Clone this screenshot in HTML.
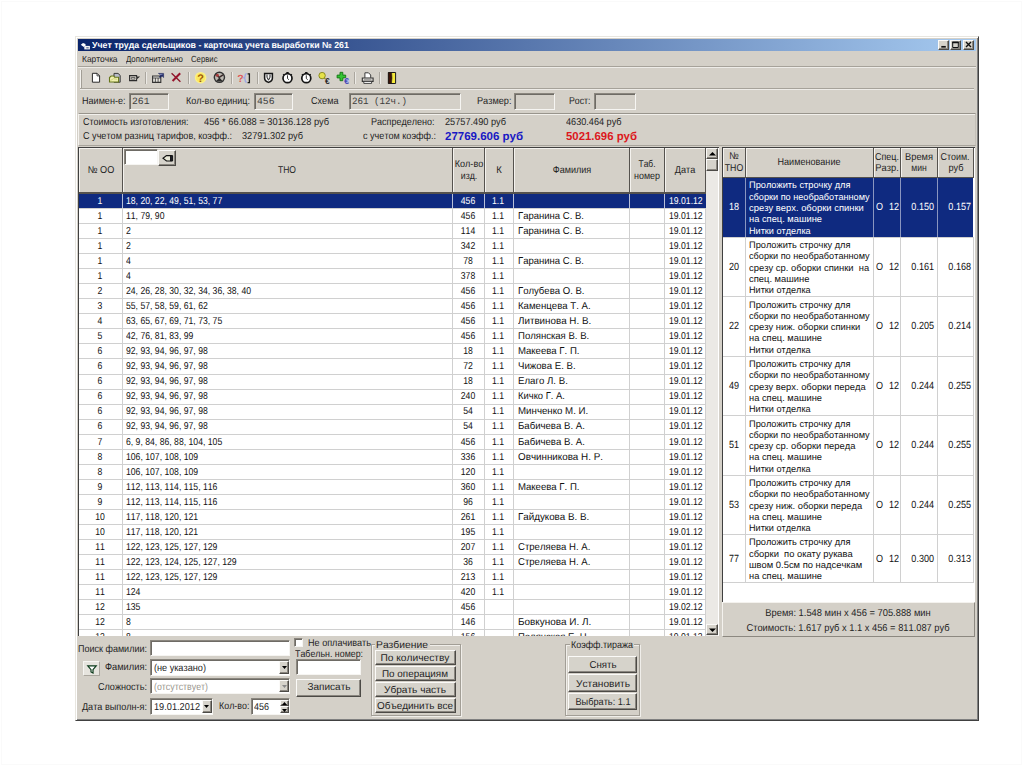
<!DOCTYPE html>
<html lang="ru"><head><meta charset="utf-8"><title>Учет труда сдельщиков</title>
<style>
html,body{margin:0;padding:0;background:#fff;}
body{width:1024px;height:767px;position:relative;overflow:hidden;font-family:"Liberation Sans",sans-serif;font-size:10.4px;color:#242424;text-rendering:geometricPrecision;}
div{position:absolute;box-sizing:border-box;}
.t{position:absolute;white-space:pre;font-kerning:none;line-height:14px;height:14px;transform-origin:left center;}
.t.c{transform-origin:center center;}
.t.r{transform-origin:right center;}
svg{position:absolute;overflow:visible;}
.sunk{border:1px solid;border-color:#8a867e #f6f5f2 #f6f5f2 #8a867e;box-shadow:inset 1px 1px 0 #6e6b65;}
.btn{background:#d6d3cb;border:1px solid;border-color:#fbfaf8 #4c4a46 #4c4a46 #fbfaf8;box-shadow:inset -1px -1px 0 #8a867f;}
.hd{background:#d4d0c8;border-right:1px solid #55524e;border-bottom:1px solid #55524e;box-shadow:inset 1px 1px 0 #f4f2ee;}
.grp{border:1px solid #a29e96;box-shadow:1px 1px 0 #f0eeea, inset 1px 1px 0 #f0eeea;}
</style></head>
<body>
<div style="left:1px;top:1px;width:1021px;height:764px;border:1px solid #fafafa;"></div>
<div style="left:75.3px;top:36px;width:903.7px;height:685px;background:#d4d0c8;border:1px solid;border-color:#e8e6e0 #404040 #404040 #e8e6e0;box-shadow:inset 1px 1px 0 #fff,inset -1px -1px 0 #808080;"></div>
<div style="left:78px;top:38.6px;width:898px;height:12.7px;background:linear-gradient(90deg,#0a246a,#a6caf0);"></div>
<svg style="left:80px;top:42px" width="11" height="8" viewBox="80 42 11 8"><path d="M80.800 44.800l2.200-1.700 2.500.8v2.300h-2.800z" fill="#fff"/><path d="M84.300 45.900h5.600v3.500h-5.600z" fill="#f4f4f4"/><path d="M86.300 47.200h2.400v1.200h-2.400z" fill="#5a6a94"/><path d="M83.200 46l1.300 1.600" stroke="#c8cce0" stroke-width="1"/></svg>
<span class="t" style="left:92px;top:38px;font-size:8.8px;color:#fff;font-weight:bold;transform:scaleX(0.999);">Учет труда сдельщиков - карточка учета выработки № 261</span>
<div class="btn" style="left:938.2px;top:40px;width:11.3px;height:9.7px;"></div>
<div class="btn" style="left:950.3px;top:40px;width:10.9px;height:9.7px;"></div>
<div class="btn" style="left:963px;top:40px;width:11.3px;height:9.7px;"></div>
<svg style="left:938px;top:40px" width="38" height="10" viewBox="938 40 38 10"><path d="M941.3 46.8h4.500" stroke="#111" stroke-width="1.700"/><path d="M952.700 42.300h5.600v5.200h-5.600z" fill="none" stroke="#111" stroke-width="1"/><path d="M952.200 42.400h6.600" stroke="#111" stroke-width="1.700"/><path d="M966 42l5 5M971 42l-5 5" stroke="#111" stroke-width="1.400"/></svg>
<span class="t" style="left:81.5px;top:51.6px;font-size:8.8px;transform:scaleX(0.955);">Карточка</span>
<span class="t" style="left:126px;top:51.6px;font-size:8.8px;transform:scaleX(0.893);">Дополнительно</span>
<span class="t" style="left:191px;top:51.6px;font-size:8.8px;transform:scaleX(0.88);">Сервис</span>
<div style="left:78px;top:66px;width:898px;height:1px;background:#a6a29a;"></div>
<div style="left:78px;top:67px;width:898px;height:1px;background:#eeece8;"></div>
<div style="left:80px;top:88px;width:894px;height:1px;background:#a6a29a;"></div>
<div style="left:80px;top:89px;width:894px;height:1px;background:#eeece8;"></div>
<div style="left:80px;top:69.5px;width:2px;height:18px;background:#f4f2ee;border-right:1px solid #a29e96;"></div>
<div style="left:145.3px;top:72px;width:1px;height:12px;background:#aaa69e;"></div>
<div style="left:146.3px;top:72px;width:1px;height:12px;background:#eceae6;"></div>
<div style="left:187.9px;top:72px;width:1px;height:12px;background:#aaa69e;"></div>
<div style="left:188.9px;top:72px;width:1px;height:12px;background:#eceae6;"></div>
<div style="left:231.0px;top:72px;width:1px;height:12px;background:#aaa69e;"></div>
<div style="left:232.0px;top:72px;width:1px;height:12px;background:#eceae6;"></div>
<div style="left:256.8px;top:72px;width:1px;height:12px;background:#aaa69e;"></div>
<div style="left:257.8px;top:72px;width:1px;height:12px;background:#eceae6;"></div>
<div style="left:353.9px;top:72px;width:1px;height:12px;background:#aaa69e;"></div>
<div style="left:354.9px;top:72px;width:1px;height:12px;background:#eceae6;"></div>
<div style="left:379.1px;top:72px;width:1px;height:12px;background:#aaa69e;"></div>
<div style="left:380.1px;top:72px;width:1px;height:12px;background:#eceae6;"></div>
<svg style="left:0;top:0" width="1024" height="100" viewBox="0 0 1024 100"><path d="M92.4 73.3h4.6l2.6 2.6v6.3h-7.2z" fill="#fff" stroke="#2a2a2a" stroke-width="1"/><path d="M97 73.3v2.6h2.6" fill="none" stroke="#2a2a2a" stroke-width=".8"/><path d="M114 73.4h4l2.2 2v6.8H114z" fill="#b8bcc8" stroke="#3a3a3a" stroke-width="1"/><path d="M109.5 82v-4.4l1.6-1.6h2.6l.9 1.2h4V82z" fill="#f0f0b0" stroke="#66761a" stroke-width="1.1"/><path d="M110.5 80.5l3-1.8 3.6.6" fill="none" stroke="#c8cc70" stroke-width=".8"/><path d="M129.6 75.6h7v1.5h2l-2 1.7v1.8h-7z" fill="#cfcbc3" stroke="#2c2c2c" stroke-width="1.1"/><path d="M131.3 77.5h3.6v1.6h-3.6z" fill="#e8e6e0" stroke="#3a3a3a" stroke-width=".7"/><path d="M152.6 76h8.2v6.4h-8.2z" fill="#e6e4de" stroke="#333" stroke-width="1.1"/><path d="M152.6 78h8.2M155.4 78v4.4M158.1 78v4.4" stroke="#333" stroke-width=".8"/><path d="M158.4 73.4h5.2v4.2l-1.6-1.5-1.8 1.7-1-1 1.8-1.7z" fill="#1c2660" stroke="#1c2660" stroke-width=".5"/><path d="M160 74.5l2.6 .2" stroke="#9aa2d8" stroke-width=".7"/><path d="M171.6 73.2l8.800 8.600" stroke="#8c1428" stroke-width="1.300" fill="none"/><path d="M180.200 73.200l-7.600 7.800" stroke="#98142c" stroke-width="2" fill="none"/><circle cx="200.6" cy="77.7" r="5.8" fill="#fbf08a"/><circle cx="200.6" cy="77.7" r="4.6" fill="#fbe860"/><text x="200.6" y="82" font-size="11" font-weight="bold" text-anchor="middle" fill="#a05a08" font-family="Liberation Sans,sans-serif">?</text><circle cx="219.400" cy="77.300" r="5.100" fill="#bcb8b0" stroke="#333" stroke-width="1.400"/><path d="M215.600 74.400l3.600 3 3.800-2.600" fill="none" stroke="#3a2a2a" stroke-width="1.500"/><path d="M215.800 81.400l3.600-4 3.600 4z" fill="#2c2c2c"/><circle cx="217.400" cy="75.200" r="1.500" fill="#a83c3c"/><text x="240.500" y="82" font-size="10.500" font-weight="bold" text-anchor="middle" fill="#e05a5a" font-family="Liberation Sans,sans-serif">?</text><path d="M246.8 73.6q-1.6 0-1.6 2t-1.2 2.3q1.2.4 1.2 2.4t1.6 2" fill="none" stroke="#a0a8e4" stroke-width="1.400"/><path d="M247.6 73.8h1.8v8.8h-1.8" fill="none" stroke="#1a1a1a" stroke-width="1.3"/><path d="M264.6 73.6h7.8v4.6q0 2.8-3.9 4.2q-3.9-1.4-3.9-4.200z" fill="#f6f6f6" stroke="#161616" stroke-width="1.5"/><path d="M267 74.6v2.6l1.5 3 1.5-3v-2.600" fill="none" stroke="#222" stroke-width="1"/><circle cx="287.5" cy="78.2" r="4.5" fill="#fff" stroke="#141414" stroke-width="1.7"/><path d="M286.3 72.6h2.400M287.5 72.600v1.400M283.1 74.200l1 .9M291.9 74.200l-1 .9" stroke="#141414" stroke-width="1.2"/><path d="M287.5 75.300v3.200l1.400 1.200" fill="none" stroke="#222" stroke-width=".9"/><circle cx="306.3" cy="78.2" r="4.5" fill="#fff" stroke="#141414" stroke-width="1.7"/><path d="M305.1 72.6h2.400M306.3 72.600v1.400M301.90000000000003 74.200l1 .9M310.7 74.200l-1 .9" stroke="#141414" stroke-width="1.2"/><path d="M306.3 75.300v3.200l1.400 1.200" fill="none" stroke="#222" stroke-width=".9"/><circle cx="322.1" cy="75.6" r="3.2" fill="#e6e24a" stroke="#8c8c20" stroke-width="1"/><path d="M324.300 78l1.200 1.200" stroke="#8c8c20" stroke-width="1.200"/><text x="327.300" y="83.600" font-size="8.5" font-weight="bold" text-anchor="middle" fill="#2a2a2a" font-family="Liberation Sans,sans-serif">€</text><path d="M340 72.300h2.800v2.800h2.900v2.800h-2.900v2.800h-2.800v-2.800h-2.900v-2.800h2.900z" fill="#34c434" stroke="#147414" stroke-width=".9"/><circle cx="346.600" cy="80.500" r="2.700" fill="#b4bce8"/><text x="346.600" y="83.800" font-size="8.5" font-weight="bold" text-anchor="middle" fill="#4a4ab0" font-family="Liberation Sans,sans-serif">€</text><path d="M364.900 77.800v-5h3.600l2.200 2.200v2.800" fill="#fff" stroke="#3a3a3a" stroke-width="1"/><path d="M362.300 78h10.800v3.400h-10.800z" fill="#e4e2dc" stroke="#333" stroke-width="1.100"/><path d="M363.800 81.400h7.800v2h-7.800z" fill="#fff" stroke="#333" stroke-width=".9"/><path d="M364 79.700h7.400" stroke="#777" stroke-width=".7"/><path d="M388.400 72.500h7.200v11h-7.200z" fill="#f6ea3c" stroke="#1a1a1a" stroke-width="1"/><path d="M388.400 72.500h3.200q.8 5.500-.2 11h-3z" fill="#3c1408" stroke="#1a1a1a" stroke-width=".6"/></svg>
<span class="t" style="left:82px;top:94.9px;font-size:10px;transform:scaleX(0.906);">Наимен-е:</span>
<div class="sunk" style="left:129px;top:93px;width:39.5px;height:16.5px;"></div>
<span class="t" style="left:132px;top:95.1px;font-size:9.6px;color:#3c3c3c;font-family:Liberation Mono,monospace;transform:scaleX(1.013);">261</span>
<span class="t" style="left:185.5px;top:94.9px;font-size:10px;transform:scaleX(0.904);">Кол-во единиц:</span>
<div class="sunk" style="left:254px;top:93px;width:38.5px;height:16.5px;"></div>
<span class="t" style="left:257px;top:95.1px;font-size:9.6px;color:#3c3c3c;font-family:Liberation Mono,monospace;transform:scaleX(1.013);">456</span>
<span class="t" style="left:310.5px;top:94.9px;font-size:10px;transform:scaleX(0.91);">Схема</span>
<div class="sunk" style="left:349px;top:93px;width:112px;height:16.5px;"></div>
<span class="t" style="left:352px;top:95.1px;font-size:9.6px;color:#3c3c3c;font-family:Liberation Mono,monospace;transform:scaleX(0.955);">261 (12ч.)</span>
<span class="t" style="left:476.5px;top:94.9px;font-size:10px;transform:scaleX(0.918);">Размер:</span>
<div class="sunk" style="left:514px;top:93px;width:41px;height:16.5px;"></div>
<span class="t" style="left:569px;top:94.9px;font-size:10px;transform:scaleX(0.874);">Рост:</span>
<div class="sunk" style="left:594px;top:93px;width:41.5px;height:16.5px;"></div>
<div style="left:78px;top:113px;width:898px;height:33px;border:1px solid;border-color:#98948c #c4c0b8 #a8a49c #f4f2ee;box-shadow:inset 0 1px 0 #f2f0ec;"></div>
<span class="t" style="left:83px;top:116px;font-size:10px;transform:scaleX(0.89);">Стоимость изготовления:</span>
<span class="t" style="left:204px;top:116px;font-size:10px;transform:scaleX(0.93);">456 * 66.088 = 30136.128 руб</span>
<span class="t" style="left:370.5px;top:116px;font-size:10px;transform:scaleX(0.902);">Распределено:</span>
<span class="t" style="left:444.5px;top:116px;font-size:10px;transform:scaleX(0.919);">25757.490 руб</span>
<span class="t" style="left:565.5px;top:116px;font-size:10px;transform:scaleX(0.913);">4630.464 руб</span>
<span class="t" style="left:83px;top:129.9px;font-size:10px;transform:scaleX(0.909);">С учетом разниц тарифов, коэфф.:</span>
<span class="t" style="left:242px;top:129.9px;font-size:10px;transform:scaleX(0.919);">32791.302 руб</span>
<span class="t" style="left:363px;top:129.9px;font-size:10px;transform:scaleX(0.908);">с учетом коэфф.:</span>
<span class="t" style="left:445px;top:129.9px;font-size:11.5px;color:#1818c4;font-weight:bold;transform:scaleX(0.999);">27769.606 руб</span>
<span class="t" style="left:565.5px;top:129.9px;font-size:11.5px;color:#dc1820;font-weight:bold;transform:scaleX(0.99);">5021.696 руб</span>
<div style="left:78px;top:147px;width:641px;height:489px;background:#fff;border-left:1px solid #404040;border-top:1px solid #404040;overflow:hidden;"></div>
<div class="hd" style="left:79px;top:148px;width:44px;height:46px;border-bottom:2px solid #55524e;"></div>
<div class="hd" style="left:123px;top:148px;width:330px;height:46px;border-bottom:2px solid #55524e;"></div>
<div class="hd" style="left:453px;top:148px;width:32px;height:46px;border-bottom:2px solid #55524e;"></div>
<div class="hd" style="left:485px;top:148px;width:29px;height:46px;border-bottom:2px solid #55524e;"></div>
<div class="hd" style="left:514px;top:148px;width:116px;height:46px;border-bottom:2px solid #55524e;"></div>
<div class="hd" style="left:630px;top:148px;width:35px;height:46px;border-bottom:2px solid #55524e;"></div>
<div class="hd" style="left:665px;top:148px;width:41px;height:46px;border-bottom:2px solid #55524e;"></div>
<span class="t c" style="left:100.5px;top:163.5px;font-size:10px;transform:translateX(-50%) scaleX(0.912);">№ ОО</span>
<span class="t c" style="left:287.3px;top:163.5px;font-size:10px;transform:translateX(-50%) scaleX(0.853);">ТНО</span>
<span class="t c" style="left:468.5px;top:157.8px;font-size:10px;transform:translateX(-50%) scaleX(0.907);">Кол-во</span>
<span class="t c" style="left:468.8px;top:170.3px;font-size:10px;transform:translateX(-50%) scaleX(0.878);">изд.</span>
<span class="t c" style="left:499.4px;top:163.7px;font-size:10px;transform:translateX(-50%) scaleX(0.95);">К</span>
<span class="t c" style="left:571.8px;top:163.5px;font-size:10px;transform:translateX(-50%) scaleX(0.907);">Фамилия</span>
<span class="t c" style="left:647px;top:157.8px;font-size:10px;transform:translateX(-50%) scaleX(0.842);">Таб.</span>
<span class="t c" style="left:647px;top:170.3px;font-size:10px;transform:translateX(-50%) scaleX(0.894);">номер</span>
<span class="t c" style="left:685px;top:163.5px;font-size:10px;transform:translateX(-50%) scaleX(0.912);">Дата</span>
<div class="sunk" style="left:124px;top:149.2px;width:33.8px;height:15.6px;background:#fff;"></div>
<div class="btn" style="left:158px;top:149.5px;width:17.5px;height:16px;"></div>
<svg style="left:162px;top:153.500px" width="12" height="9" viewBox="0 0 12 9"><path d="M1 4.2L4.5 1.6h4.2V7H4.5z" fill="#e8e8d8" stroke="#111" stroke-width="1.1"/><path d="M8.8 1.6h1.8V7H8.8z" fill="#223" stroke="#111" stroke-width="1"/></svg>
<div style="left:79px;top:194px;width:627px;height:442px;overflow:hidden;background:#fff;">
<div style="left:43px;top:0;width:1px;height:442px;background:#d0d0d0;"></div>
<div style="left:373px;top:0;width:1px;height:442px;background:#d0d0d0;"></div>
<div style="left:405px;top:0;width:1px;height:442px;background:#d0d0d0;"></div>
<div style="left:434px;top:0;width:1px;height:442px;background:#d0d0d0;"></div>
<div style="left:550px;top:0;width:1px;height:442px;background:#d0d0d0;"></div>
<div style="left:585px;top:0;width:1px;height:442px;background:#d0d0d0;"></div>
<div style="left:626px;top:0;width:1px;height:442px;background:#d0d0d0;"></div>
<div style="left:0;top:14.04px;width:627px;height:1px;background:#d0d0d0;"></div>
<div style="left:0;top:29.09px;width:627px;height:1px;background:#d0d0d0;"></div>
<div style="left:0;top:44.13px;width:627px;height:1px;background:#d0d0d0;"></div>
<div style="left:0;top:59.18px;width:627px;height:1px;background:#d0d0d0;"></div>
<div style="left:0;top:74.22px;width:627px;height:1px;background:#d0d0d0;"></div>
<div style="left:0;top:89.27px;width:627px;height:1px;background:#d0d0d0;"></div>
<div style="left:0;top:104.31px;width:627px;height:1px;background:#d0d0d0;"></div>
<div style="left:0;top:119.36px;width:627px;height:1px;background:#d0d0d0;"></div>
<div style="left:0;top:134.41px;width:627px;height:1px;background:#d0d0d0;"></div>
<div style="left:0;top:149.45px;width:627px;height:1px;background:#d0d0d0;"></div>
<div style="left:0;top:164.49px;width:627px;height:1px;background:#d0d0d0;"></div>
<div style="left:0;top:179.54px;width:627px;height:1px;background:#d0d0d0;"></div>
<div style="left:0;top:194.58px;width:627px;height:1px;background:#d0d0d0;"></div>
<div style="left:0;top:209.63px;width:627px;height:1px;background:#d0d0d0;"></div>
<div style="left:0;top:224.67px;width:627px;height:1px;background:#d0d0d0;"></div>
<div style="left:0;top:239.72px;width:627px;height:1px;background:#d0d0d0;"></div>
<div style="left:0;top:254.76px;width:627px;height:1px;background:#d0d0d0;"></div>
<div style="left:0;top:269.81px;width:627px;height:1px;background:#d0d0d0;"></div>
<div style="left:0;top:284.86px;width:627px;height:1px;background:#d0d0d0;"></div>
<div style="left:0;top:299.9px;width:627px;height:1px;background:#d0d0d0;"></div>
<div style="left:0;top:314.94px;width:627px;height:1px;background:#d0d0d0;"></div>
<div style="left:0;top:329.99px;width:627px;height:1px;background:#d0d0d0;"></div>
<div style="left:0;top:345.04px;width:627px;height:1px;background:#d0d0d0;"></div>
<div style="left:0;top:360.08px;width:627px;height:1px;background:#d0d0d0;"></div>
<div style="left:0;top:375.12px;width:627px;height:1px;background:#d0d0d0;"></div>
<div style="left:0;top:390.17px;width:627px;height:1px;background:#d0d0d0;"></div>
<div style="left:0;top:405.22px;width:627px;height:1px;background:#d0d0d0;"></div>
<div style="left:0;top:420.26px;width:627px;height:1px;background:#d0d0d0;"></div>
<div style="left:0;top:435.31px;width:627px;height:1px;background:#d0d0d0;"></div>
<div style="left:0;top:450.35px;width:627px;height:1px;background:#d0d0d0;"></div>
<div style="left:0;top:0;width:627px;height:13.5px;background:#0f2a80;"></div>
<div style="left:43px;top:0;width:1px;height:13.5px;background:#b8c0d8;"></div>
<div style="left:373px;top:0;width:1px;height:13.5px;background:#b8c0d8;"></div>
<div style="left:405px;top:0;width:1px;height:13.5px;background:#b8c0d8;"></div>
<div style="left:434px;top:0;width:1px;height:13.5px;background:#b8c0d8;"></div>
<div style="left:550px;top:0;width:1px;height:13.5px;background:#b8c0d8;"></div>
<div style="left:585px;top:0;width:1px;height:13.5px;background:#b8c0d8;"></div>
</div>
<span class="t c" style="left:100px;top:194.8px;font-size:10px;color:#fff;transform:translateX(-50%) scaleX(0.865);">1</span>
<span class="t" style="left:126px;top:194.8px;font-size:10px;color:#fff;transform:scaleX(0.865);">18, 20, 22, 49, 51, 53, 77</span>
<span class="t c" style="left:468.3px;top:194.8px;font-size:10px;color:#fff;transform:translateX(-50%) scaleX(0.865);">456</span>
<span class="t c" style="left:498.3px;top:194.8px;font-size:10px;color:#fff;transform:translateX(-50%) scaleX(0.865);">1.1</span>
<span class="t" style="left:669px;top:194.8px;font-size:10px;color:#fff;transform:scaleX(0.865);">19.01.12</span>
<span class="t c" style="left:100px;top:209.84px;font-size:10px;color:#111;transform:translateX(-50%) scaleX(0.865);">1</span>
<span class="t" style="left:126px;top:209.84px;font-size:10px;color:#111;transform:scaleX(0.865);">11, 79, 90</span>
<span class="t c" style="left:468.3px;top:209.84px;font-size:10px;color:#111;transform:translateX(-50%) scaleX(0.865);">456</span>
<span class="t c" style="left:498.3px;top:209.84px;font-size:10px;color:#111;transform:translateX(-50%) scaleX(0.865);">1.1</span>
<span class="t" style="left:518px;top:209.84px;font-size:10px;color:#111;transform:scaleX(0.952);">Гаранина С. В.</span>
<span class="t" style="left:669px;top:209.84px;font-size:10px;color:#111;transform:scaleX(0.865);">19.01.12</span>
<span class="t c" style="left:100px;top:224.89px;font-size:10px;color:#111;transform:translateX(-50%) scaleX(0.865);">1</span>
<span class="t" style="left:126px;top:224.89px;font-size:10px;color:#111;transform:scaleX(0.865);">2</span>
<span class="t c" style="left:468.3px;top:224.89px;font-size:10px;color:#111;transform:translateX(-50%) scaleX(0.865);">114</span>
<span class="t c" style="left:498.3px;top:224.89px;font-size:10px;color:#111;transform:translateX(-50%) scaleX(0.865);">1.1</span>
<span class="t" style="left:518px;top:224.89px;font-size:10px;color:#111;transform:scaleX(0.952);">Гаранина С. В.</span>
<span class="t" style="left:669px;top:224.89px;font-size:10px;color:#111;transform:scaleX(0.865);">19.01.12</span>
<span class="t c" style="left:100px;top:239.94px;font-size:10px;color:#111;transform:translateX(-50%) scaleX(0.865);">1</span>
<span class="t" style="left:126px;top:239.94px;font-size:10px;color:#111;transform:scaleX(0.865);">2</span>
<span class="t c" style="left:468.3px;top:239.94px;font-size:10px;color:#111;transform:translateX(-50%) scaleX(0.865);">342</span>
<span class="t c" style="left:498.3px;top:239.94px;font-size:10px;color:#111;transform:translateX(-50%) scaleX(0.865);">1.1</span>
<span class="t" style="left:669px;top:239.94px;font-size:10px;color:#111;transform:scaleX(0.865);">19.01.12</span>
<span class="t c" style="left:100px;top:254.98px;font-size:10px;color:#111;transform:translateX(-50%) scaleX(0.865);">1</span>
<span class="t" style="left:126px;top:254.98px;font-size:10px;color:#111;transform:scaleX(0.865);">4</span>
<span class="t c" style="left:468.3px;top:254.98px;font-size:10px;color:#111;transform:translateX(-50%) scaleX(0.865);">78</span>
<span class="t c" style="left:498.3px;top:254.98px;font-size:10px;color:#111;transform:translateX(-50%) scaleX(0.865);">1.1</span>
<span class="t" style="left:518px;top:254.98px;font-size:10px;color:#111;transform:scaleX(0.952);">Гаранина С. В.</span>
<span class="t" style="left:669px;top:254.98px;font-size:10px;color:#111;transform:scaleX(0.865);">19.01.12</span>
<span class="t c" style="left:100px;top:270.03px;font-size:10px;color:#111;transform:translateX(-50%) scaleX(0.865);">1</span>
<span class="t" style="left:126px;top:270.03px;font-size:10px;color:#111;transform:scaleX(0.865);">4</span>
<span class="t c" style="left:468.3px;top:270.03px;font-size:10px;color:#111;transform:translateX(-50%) scaleX(0.865);">378</span>
<span class="t c" style="left:498.3px;top:270.03px;font-size:10px;color:#111;transform:translateX(-50%) scaleX(0.865);">1.1</span>
<span class="t" style="left:669px;top:270.03px;font-size:10px;color:#111;transform:scaleX(0.865);">19.01.12</span>
<span class="t c" style="left:100px;top:285.07px;font-size:10px;color:#111;transform:translateX(-50%) scaleX(0.865);">2</span>
<span class="t" style="left:126px;top:285.07px;font-size:10px;color:#111;transform:scaleX(0.865);">24, 26, 28, 30, 32, 34, 36, 38, 40</span>
<span class="t c" style="left:468.3px;top:285.07px;font-size:10px;color:#111;transform:translateX(-50%) scaleX(0.865);">456</span>
<span class="t c" style="left:498.3px;top:285.07px;font-size:10px;color:#111;transform:translateX(-50%) scaleX(0.865);">1.1</span>
<span class="t" style="left:518px;top:285.07px;font-size:10px;color:#111;transform:scaleX(0.956);">Голубева О. В.</span>
<span class="t" style="left:669px;top:285.07px;font-size:10px;color:#111;transform:scaleX(0.865);">19.01.12</span>
<span class="t c" style="left:100px;top:300.12px;font-size:10px;color:#111;transform:translateX(-50%) scaleX(0.865);">3</span>
<span class="t" style="left:126px;top:300.12px;font-size:10px;color:#111;transform:scaleX(0.865);">55, 57, 58, 59, 61, 62</span>
<span class="t c" style="left:468.3px;top:300.12px;font-size:10px;color:#111;transform:translateX(-50%) scaleX(0.865);">456</span>
<span class="t c" style="left:498.3px;top:300.12px;font-size:10px;color:#111;transform:translateX(-50%) scaleX(0.865);">1.1</span>
<span class="t" style="left:518px;top:300.12px;font-size:10px;color:#111;transform:scaleX(0.964);">Каменцева Т. А.</span>
<span class="t" style="left:669px;top:300.12px;font-size:10px;color:#111;transform:scaleX(0.865);">19.01.12</span>
<span class="t c" style="left:100px;top:315.16px;font-size:10px;color:#111;transform:translateX(-50%) scaleX(0.865);">4</span>
<span class="t" style="left:126px;top:315.16px;font-size:10px;color:#111;transform:scaleX(0.865);">63, 65, 67, 69, 71, 73, 75</span>
<span class="t c" style="left:468.3px;top:315.16px;font-size:10px;color:#111;transform:translateX(-50%) scaleX(0.865);">456</span>
<span class="t c" style="left:498.3px;top:315.16px;font-size:10px;color:#111;transform:translateX(-50%) scaleX(0.865);">1.1</span>
<span class="t" style="left:518px;top:315.16px;font-size:10px;color:#111;transform:scaleX(0.981);">Литвинова Н. В.</span>
<span class="t" style="left:669px;top:315.16px;font-size:10px;color:#111;transform:scaleX(0.865);">19.01.12</span>
<span class="t c" style="left:100px;top:330.2px;font-size:10px;color:#111;transform:translateX(-50%) scaleX(0.865);">5</span>
<span class="t" style="left:126px;top:330.2px;font-size:10px;color:#111;transform:scaleX(0.865);">42, 76, 81, 83, 99</span>
<span class="t c" style="left:468.3px;top:330.2px;font-size:10px;color:#111;transform:translateX(-50%) scaleX(0.865);">456</span>
<span class="t c" style="left:498.3px;top:330.2px;font-size:10px;color:#111;transform:translateX(-50%) scaleX(0.865);">1.1</span>
<span class="t" style="left:518px;top:330.2px;font-size:10px;color:#111;transform:scaleX(0.958);">Полянская В. В.</span>
<span class="t" style="left:669px;top:330.2px;font-size:10px;color:#111;transform:scaleX(0.865);">19.01.12</span>
<span class="t c" style="left:100px;top:345.25px;font-size:10px;color:#111;transform:translateX(-50%) scaleX(0.865);">6</span>
<span class="t" style="left:126px;top:345.25px;font-size:10px;color:#111;transform:scaleX(0.865);">92, 93, 94, 96, 97, 98</span>
<span class="t c" style="left:468.3px;top:345.25px;font-size:10px;color:#111;transform:translateX(-50%) scaleX(0.865);">18</span>
<span class="t c" style="left:498.3px;top:345.25px;font-size:10px;color:#111;transform:translateX(-50%) scaleX(0.865);">1.1</span>
<span class="t" style="left:518px;top:345.25px;font-size:10px;color:#111;transform:scaleX(0.961);">Макеева Г. П.</span>
<span class="t" style="left:669px;top:345.25px;font-size:10px;color:#111;transform:scaleX(0.865);">19.01.12</span>
<span class="t c" style="left:100px;top:360.3px;font-size:10px;color:#111;transform:translateX(-50%) scaleX(0.865);">6</span>
<span class="t" style="left:126px;top:360.3px;font-size:10px;color:#111;transform:scaleX(0.865);">92, 93, 94, 96, 97, 98</span>
<span class="t c" style="left:468.3px;top:360.3px;font-size:10px;color:#111;transform:translateX(-50%) scaleX(0.865);">72</span>
<span class="t c" style="left:498.3px;top:360.3px;font-size:10px;color:#111;transform:translateX(-50%) scaleX(0.865);">1.1</span>
<span class="t" style="left:518px;top:360.3px;font-size:10px;color:#111;transform:scaleX(0.964);">Чижова Е. В.</span>
<span class="t" style="left:669px;top:360.3px;font-size:10px;color:#111;transform:scaleX(0.865);">19.01.12</span>
<span class="t c" style="left:100px;top:375.34px;font-size:10px;color:#111;transform:translateX(-50%) scaleX(0.865);">6</span>
<span class="t" style="left:126px;top:375.34px;font-size:10px;color:#111;transform:scaleX(0.865);">92, 93, 94, 96, 97, 98</span>
<span class="t c" style="left:468.3px;top:375.34px;font-size:10px;color:#111;transform:translateX(-50%) scaleX(0.865);">18</span>
<span class="t c" style="left:498.3px;top:375.34px;font-size:10px;color:#111;transform:translateX(-50%) scaleX(0.865);">1.1</span>
<span class="t" style="left:518px;top:375.34px;font-size:10px;color:#111;transform:scaleX(0.965);">Елаго Л. В.</span>
<span class="t" style="left:669px;top:375.34px;font-size:10px;color:#111;transform:scaleX(0.865);">19.01.12</span>
<span class="t c" style="left:100px;top:390.39px;font-size:10px;color:#111;transform:translateX(-50%) scaleX(0.865);">6</span>
<span class="t" style="left:126px;top:390.39px;font-size:10px;color:#111;transform:scaleX(0.865);">92, 93, 94, 96, 97, 98</span>
<span class="t c" style="left:468.3px;top:390.39px;font-size:10px;color:#111;transform:translateX(-50%) scaleX(0.865);">240</span>
<span class="t c" style="left:498.3px;top:390.39px;font-size:10px;color:#111;transform:translateX(-50%) scaleX(0.865);">1.1</span>
<span class="t" style="left:518px;top:390.39px;font-size:10px;color:#111;transform:scaleX(0.942);">Кичко Г. А.</span>
<span class="t" style="left:669px;top:390.39px;font-size:10px;color:#111;transform:scaleX(0.865);">19.01.12</span>
<span class="t c" style="left:100px;top:405.43px;font-size:10px;color:#111;transform:translateX(-50%) scaleX(0.865);">6</span>
<span class="t" style="left:126px;top:405.43px;font-size:10px;color:#111;transform:scaleX(0.865);">92, 93, 94, 96, 97, 98</span>
<span class="t c" style="left:468.3px;top:405.43px;font-size:10px;color:#111;transform:translateX(-50%) scaleX(0.865);">54</span>
<span class="t c" style="left:498.3px;top:405.43px;font-size:10px;color:#111;transform:translateX(-50%) scaleX(0.865);">1.1</span>
<span class="t" style="left:518px;top:405.43px;font-size:10px;color:#111;transform:scaleX(0.972);">Минченко М. И.</span>
<span class="t" style="left:669px;top:405.43px;font-size:10px;color:#111;transform:scaleX(0.865);">19.01.12</span>
<span class="t c" style="left:100px;top:420.48px;font-size:10px;color:#111;transform:translateX(-50%) scaleX(0.865);">6</span>
<span class="t" style="left:126px;top:420.48px;font-size:10px;color:#111;transform:scaleX(0.865);">92, 93, 94, 96, 97, 98</span>
<span class="t c" style="left:468.3px;top:420.48px;font-size:10px;color:#111;transform:translateX(-50%) scaleX(0.865);">54</span>
<span class="t c" style="left:498.3px;top:420.48px;font-size:10px;color:#111;transform:translateX(-50%) scaleX(0.865);">1.1</span>
<span class="t" style="left:518px;top:420.48px;font-size:10px;color:#111;transform:scaleX(0.961);">Бабичева В. А.</span>
<span class="t" style="left:669px;top:420.48px;font-size:10px;color:#111;transform:scaleX(0.865);">19.01.12</span>
<span class="t c" style="left:100px;top:435.52px;font-size:10px;color:#111;transform:translateX(-50%) scaleX(0.865);">7</span>
<span class="t" style="left:126px;top:435.52px;font-size:10px;color:#111;transform:scaleX(0.865);">6, 9, 84, 86, 88, 104, 105</span>
<span class="t c" style="left:468.3px;top:435.52px;font-size:10px;color:#111;transform:translateX(-50%) scaleX(0.865);">456</span>
<span class="t c" style="left:498.3px;top:435.52px;font-size:10px;color:#111;transform:translateX(-50%) scaleX(0.865);">1.1</span>
<span class="t" style="left:518px;top:435.52px;font-size:10px;color:#111;transform:scaleX(0.961);">Бабичева В. А.</span>
<span class="t" style="left:669px;top:435.52px;font-size:10px;color:#111;transform:scaleX(0.865);">19.01.12</span>
<span class="t c" style="left:100px;top:450.56px;font-size:10px;color:#111;transform:translateX(-50%) scaleX(0.865);">8</span>
<span class="t" style="left:126px;top:450.56px;font-size:10px;color:#111;transform:scaleX(0.865);">106, 107, 108, 109</span>
<span class="t c" style="left:468.3px;top:450.56px;font-size:10px;color:#111;transform:translateX(-50%) scaleX(0.865);">336</span>
<span class="t c" style="left:498.3px;top:450.56px;font-size:10px;color:#111;transform:translateX(-50%) scaleX(0.865);">1.1</span>
<span class="t" style="left:518px;top:450.56px;font-size:10px;color:#111;transform:scaleX(0.984);">Овчинникова Н. Р.</span>
<span class="t" style="left:669px;top:450.56px;font-size:10px;color:#111;transform:scaleX(0.865);">19.01.12</span>
<span class="t c" style="left:100px;top:465.61px;font-size:10px;color:#111;transform:translateX(-50%) scaleX(0.865);">8</span>
<span class="t" style="left:126px;top:465.61px;font-size:10px;color:#111;transform:scaleX(0.865);">106, 107, 108, 109</span>
<span class="t c" style="left:468.3px;top:465.61px;font-size:10px;color:#111;transform:translateX(-50%) scaleX(0.865);">120</span>
<span class="t c" style="left:498.3px;top:465.61px;font-size:10px;color:#111;transform:translateX(-50%) scaleX(0.865);">1.1</span>
<span class="t" style="left:669px;top:465.61px;font-size:10px;color:#111;transform:scaleX(0.865);">19.01.12</span>
<span class="t c" style="left:100px;top:480.66px;font-size:10px;color:#111;transform:translateX(-50%) scaleX(0.865);">9</span>
<span class="t" style="left:126px;top:480.66px;font-size:10px;color:#111;transform:scaleX(0.865);">112, 113, 114, 115, 116</span>
<span class="t c" style="left:468.3px;top:480.66px;font-size:10px;color:#111;transform:translateX(-50%) scaleX(0.865);">360</span>
<span class="t c" style="left:498.3px;top:480.66px;font-size:10px;color:#111;transform:translateX(-50%) scaleX(0.865);">1.1</span>
<span class="t" style="left:518px;top:480.66px;font-size:10px;color:#111;transform:scaleX(0.961);">Макеева Г. П.</span>
<span class="t" style="left:669px;top:480.66px;font-size:10px;color:#111;transform:scaleX(0.865);">19.01.12</span>
<span class="t c" style="left:100px;top:495.7px;font-size:10px;color:#111;transform:translateX(-50%) scaleX(0.865);">9</span>
<span class="t" style="left:126px;top:495.7px;font-size:10px;color:#111;transform:scaleX(0.865);">112, 113, 114, 115, 116</span>
<span class="t c" style="left:468.3px;top:495.7px;font-size:10px;color:#111;transform:translateX(-50%) scaleX(0.865);">96</span>
<span class="t c" style="left:498.3px;top:495.7px;font-size:10px;color:#111;transform:translateX(-50%) scaleX(0.865);">1.1</span>
<span class="t" style="left:669px;top:495.7px;font-size:10px;color:#111;transform:scaleX(0.865);">19.01.12</span>
<span class="t c" style="left:100px;top:510.75px;font-size:10px;color:#111;transform:translateX(-50%) scaleX(0.865);">10</span>
<span class="t" style="left:126px;top:510.75px;font-size:10px;color:#111;transform:scaleX(0.865);">117, 118, 120, 121</span>
<span class="t c" style="left:468.3px;top:510.75px;font-size:10px;color:#111;transform:translateX(-50%) scaleX(0.865);">261</span>
<span class="t c" style="left:498.3px;top:510.75px;font-size:10px;color:#111;transform:translateX(-50%) scaleX(0.865);">1.1</span>
<span class="t" style="left:518px;top:510.75px;font-size:10px;color:#111;transform:scaleX(0.98);">Гайдукова В. В.</span>
<span class="t" style="left:669px;top:510.75px;font-size:10px;color:#111;transform:scaleX(0.865);">19.01.12</span>
<span class="t c" style="left:100px;top:525.79px;font-size:10px;color:#111;transform:translateX(-50%) scaleX(0.865);">10</span>
<span class="t" style="left:126px;top:525.79px;font-size:10px;color:#111;transform:scaleX(0.865);">117, 118, 120, 121</span>
<span class="t c" style="left:468.3px;top:525.79px;font-size:10px;color:#111;transform:translateX(-50%) scaleX(0.865);">195</span>
<span class="t c" style="left:498.3px;top:525.79px;font-size:10px;color:#111;transform:translateX(-50%) scaleX(0.865);">1.1</span>
<span class="t" style="left:669px;top:525.79px;font-size:10px;color:#111;transform:scaleX(0.865);">19.01.12</span>
<span class="t c" style="left:100px;top:540.84px;font-size:10px;color:#111;transform:translateX(-50%) scaleX(0.865);">11</span>
<span class="t" style="left:126px;top:540.84px;font-size:10px;color:#111;transform:scaleX(0.865);">122, 123, 125, 127, 129</span>
<span class="t c" style="left:468.3px;top:540.84px;font-size:10px;color:#111;transform:translateX(-50%) scaleX(0.865);">207</span>
<span class="t c" style="left:498.3px;top:540.84px;font-size:10px;color:#111;transform:translateX(-50%) scaleX(0.865);">1.1</span>
<span class="t" style="left:518px;top:540.84px;font-size:10px;color:#111;transform:scaleX(0.957);">Стреляева Н. А.</span>
<span class="t" style="left:669px;top:540.84px;font-size:10px;color:#111;transform:scaleX(0.865);">19.01.12</span>
<span class="t c" style="left:100px;top:555.88px;font-size:10px;color:#111;transform:translateX(-50%) scaleX(0.865);">11</span>
<span class="t" style="left:126px;top:555.88px;font-size:10px;color:#111;transform:scaleX(0.865);">122, 123, 124, 125, 127, 129</span>
<span class="t c" style="left:468.3px;top:555.88px;font-size:10px;color:#111;transform:translateX(-50%) scaleX(0.865);">36</span>
<span class="t c" style="left:498.3px;top:555.88px;font-size:10px;color:#111;transform:translateX(-50%) scaleX(0.865);">1.1</span>
<span class="t" style="left:518px;top:555.88px;font-size:10px;color:#111;transform:scaleX(0.957);">Стреляева Н. А.</span>
<span class="t" style="left:669px;top:555.88px;font-size:10px;color:#111;transform:scaleX(0.865);">19.01.12</span>
<span class="t c" style="left:100px;top:570.92px;font-size:10px;color:#111;transform:translateX(-50%) scaleX(0.865);">11</span>
<span class="t" style="left:126px;top:570.92px;font-size:10px;color:#111;transform:scaleX(0.865);">122, 123, 125, 127, 129</span>
<span class="t c" style="left:468.3px;top:570.92px;font-size:10px;color:#111;transform:translateX(-50%) scaleX(0.865);">213</span>
<span class="t c" style="left:498.3px;top:570.92px;font-size:10px;color:#111;transform:translateX(-50%) scaleX(0.865);">1.1</span>
<span class="t" style="left:669px;top:570.92px;font-size:10px;color:#111;transform:scaleX(0.865);">19.01.12</span>
<span class="t c" style="left:100px;top:585.97px;font-size:10px;color:#111;transform:translateX(-50%) scaleX(0.865);">11</span>
<span class="t" style="left:126px;top:585.97px;font-size:10px;color:#111;transform:scaleX(0.865);">124</span>
<span class="t c" style="left:468.3px;top:585.97px;font-size:10px;color:#111;transform:translateX(-50%) scaleX(0.865);">420</span>
<span class="t c" style="left:498.3px;top:585.97px;font-size:10px;color:#111;transform:translateX(-50%) scaleX(0.865);">1.1</span>
<span class="t" style="left:669px;top:585.97px;font-size:10px;color:#111;transform:scaleX(0.865);">19.01.12</span>
<span class="t c" style="left:100px;top:601.01px;font-size:10px;color:#111;transform:translateX(-50%) scaleX(0.865);">12</span>
<span class="t" style="left:126px;top:601.01px;font-size:10px;color:#111;transform:scaleX(0.865);">135</span>
<span class="t c" style="left:468.3px;top:601.01px;font-size:10px;color:#111;transform:translateX(-50%) scaleX(0.865);">456</span>
<span class="t" style="left:669px;top:601.01px;font-size:10px;color:#111;transform:scaleX(0.865);">19.02.12</span>
<span class="t c" style="left:100px;top:616.06px;font-size:10px;color:#111;transform:translateX(-50%) scaleX(0.865);">12</span>
<span class="t" style="left:126px;top:616.06px;font-size:10px;color:#111;transform:scaleX(0.865);">8</span>
<span class="t c" style="left:468.3px;top:616.06px;font-size:10px;color:#111;transform:translateX(-50%) scaleX(0.865);">146</span>
<span class="t" style="left:518px;top:616.06px;font-size:10px;color:#111;transform:scaleX(0.994);">Бовкунова И. Л.</span>
<span class="t" style="left:669px;top:616.06px;font-size:10px;color:#111;transform:scaleX(0.865);">19.01.12</span>
<span class="t c" style="left:100px;top:631.11px;font-size:10px;color:#111;transform:translateX(-50%) scaleX(0.865);clip-path:inset(0 0 9.1px 0);">12</span>
<span class="t" style="left:126px;top:631.11px;font-size:10px;color:#111;transform:scaleX(0.865);clip-path:inset(0 0 9.1px 0);">8</span>
<span class="t c" style="left:468.3px;top:631.11px;font-size:10px;color:#111;transform:translateX(-50%) scaleX(0.865);clip-path:inset(0 0 9.1px 0);">156</span>
<span class="t" style="left:518px;top:631.11px;font-size:10px;color:#111;transform:scaleX(0.951);clip-path:inset(0 0 9.1px 0);">Полянская Е. Н.</span>
<span class="t" style="left:669px;top:631.11px;font-size:10px;color:#111;transform:scaleX(0.865);clip-path:inset(0 0 9.1px 0);">19.01.12</span>
<div style="left:706px;top:148px;width:12px;height:488px;background:#ebe9e5;"></div>
<div class="btn" style="left:706px;top:148px;width:12px;height:11px;"></div>
<div class="btn" style="left:706px;top:159px;width:12px;height:11.5px;"></div>
<div class="btn" style="left:706px;top:624.3px;width:12px;height:11px;"></div>
<svg style="left:709px;top:151px" width="7" height="5" viewBox="0 0 7 5"><path d="M0 4.5L3.5 1 7 4.5z" fill="#000"/></svg>
<svg style="left:709px;top:628px" width="7" height="5" viewBox="0 0 7 5"><path d="M0 .5L3.5 4 7 .5z" fill="#000"/></svg>
<div style="left:722px;top:147px;width:252.7px;height:455px;background:#fff;border-left:1px solid #404040;border-top:1px solid #404040;"></div>
<div class="hd" style="left:723px;top:148px;width:23px;height:30px;"></div>
<div class="hd" style="left:746px;top:148px;width:127.5px;height:30px;"></div>
<div class="hd" style="left:873.5px;top:148px;width:27.5px;height:30px;"></div>
<div class="hd" style="left:901px;top:148px;width:37px;height:30px;"></div>
<div class="hd" style="left:938px;top:148px;width:35.5px;height:30px;"></div>
<span class="t c" style="left:734.3px;top:149.7px;font-size:10px;transform:translateX(-50%) scaleX(0.885);">№</span>
<span class="t c" style="left:734.3px;top:162px;font-size:10px;transform:translateX(-50%) scaleX(0.876);">ТНО</span>
<span class="t c" style="left:809px;top:156.2px;font-size:10px;transform:translateX(-50%) scaleX(0.907);">Наименование</span>
<span class="t c" style="left:887px;top:150.6px;font-size:10px;transform:translateX(-50%) scaleX(0.898);">Спец.</span>
<span class="t c" style="left:887px;top:162.3px;font-size:10px;transform:translateX(-50%) scaleX(0.934);">Разр.</span>
<span class="t c" style="left:919px;top:150.6px;font-size:10px;transform:translateX(-50%) scaleX(0.93);">Время</span>
<span class="t c" style="left:919px;top:162.3px;font-size:10px;transform:translateX(-50%) scaleX(0.862);">мин</span>
<span class="t c" style="left:955.2px;top:150.6px;font-size:10px;transform:translateX(-50%) scaleX(0.889);">Стоим.</span>
<span class="t c" style="left:955.7px;top:162.3px;font-size:10px;transform:translateX(-50%) scaleX(0.92);">руб</span>
<div style="left:723px;top:178px;width:250.3px;height:59px;background:#0f2a80;"></div>
<div style="left:745px;top:178px;width:1px;height:59px;background:#8a96c0;"></div>
<div style="left:872.5px;top:178px;width:1px;height:59px;background:#8a96c0;"></div>
<div style="left:900px;top:178px;width:1px;height:59px;background:#8a96c0;"></div>
<div style="left:937px;top:178px;width:1px;height:59px;background:#8a96c0;"></div>
<div style="left:723px;top:236.7px;width:251px;height:1px;background:#d0d0d0;"></div>
<div style="left:723px;top:296px;width:251px;height:1px;background:#d0d0d0;"></div>
<div style="left:723px;top:355.5px;width:251px;height:1px;background:#d0d0d0;"></div>
<div style="left:723px;top:415px;width:251px;height:1px;background:#d0d0d0;"></div>
<div style="left:723px;top:474.5px;width:251px;height:1px;background:#d0d0d0;"></div>
<div style="left:723px;top:534px;width:251px;height:1px;background:#d0d0d0;"></div>
<div style="left:723px;top:582px;width:251px;height:1px;background:#d0d0d0;"></div>
<div style="left:745px;top:237px;width:1px;height:346px;background:#d0d0d0;"></div>
<div style="left:872.5px;top:237px;width:1px;height:346px;background:#d0d0d0;"></div>
<div style="left:900px;top:237px;width:1px;height:346px;background:#d0d0d0;"></div>
<div style="left:937px;top:237px;width:1px;height:346px;background:#d0d0d0;"></div>
<div style="left:972.5px;top:237px;width:1px;height:346px;background:#d0d0d0;"></div>
<span class="t" style="left:749px;top:178.44px;font-size:9.3px;color:#fff;transform:scaleX(0.995);">Проложить строчку для</span>
<span class="t" style="left:749px;top:189.72px;font-size:9.3px;color:#fff;transform:scaleX(0.984);">сборки по необработанному</span>
<span class="t" style="left:749px;top:201.0px;font-size:9.3px;color:#fff;transform:scaleX(1.011);">срезу верх. оборки спинки</span>
<span class="t" style="left:749px;top:212.28px;font-size:9.3px;color:#fff;transform:scaleX(1.003);">на спец. машине</span>
<span class="t" style="left:749px;top:223.56px;font-size:9.3px;color:#fff;transform:scaleX(0.981);">Нитки отделка</span>
<span class="t c" style="left:734.3px;top:201.2px;font-size:10.4px;color:#fff;transform:translateX(-50%) scaleX(0.87);">18</span>
<span class="t" style="left:875.5px;top:201.2px;font-size:10.4px;color:#fff;transform:scaleX(0.87);">О</span>
<span class="t r" style="left:899px;top:201.2px;font-size:10.4px;color:#fff;transform:translateX(-100%) scaleX(0.87);">12</span>
<span class="t r" style="left:934px;top:201.2px;font-size:10.4px;color:#fff;transform:translateX(-100%) scaleX(0.87);">0.150</span>
<span class="t r" style="left:970.5px;top:201.2px;font-size:10.4px;color:#fff;transform:translateX(-100%) scaleX(0.87);">0.157</span>
<span class="t" style="left:749px;top:237.94px;font-size:9.3px;color:#111;transform:scaleX(0.995);">Проложить строчку для</span>
<span class="t" style="left:749px;top:249.22px;font-size:9.3px;color:#111;transform:scaleX(0.984);">сборки по необработанному</span>
<span class="t" style="left:749px;top:260.5px;font-size:9.3px;color:#111;transform:scaleX(1.011);">срезу ср. оборки спинки  на</span>
<span class="t" style="left:749px;top:271.78px;font-size:9.3px;color:#111;transform:scaleX(1.011);">спец. машине</span>
<span class="t" style="left:749px;top:283.06px;font-size:9.3px;color:#111;transform:scaleX(0.981);">Нитки отделка</span>
<span class="t c" style="left:734.3px;top:260.7px;font-size:10.4px;color:#111;transform:translateX(-50%) scaleX(0.87);">20</span>
<span class="t" style="left:875.5px;top:260.7px;font-size:10.4px;color:#111;transform:scaleX(0.87);">О</span>
<span class="t r" style="left:899px;top:260.7px;font-size:10.4px;color:#111;transform:translateX(-100%) scaleX(0.87);">12</span>
<span class="t r" style="left:934px;top:260.7px;font-size:10.4px;color:#111;transform:translateX(-100%) scaleX(0.87);">0.161</span>
<span class="t r" style="left:970.5px;top:260.7px;font-size:10.4px;color:#111;transform:translateX(-100%) scaleX(0.87);">0.168</span>
<span class="t" style="left:749px;top:297.59px;font-size:9.3px;color:#111;transform:scaleX(0.995);">Проложить строчку для</span>
<span class="t" style="left:749px;top:308.87px;font-size:9.3px;color:#111;transform:scaleX(0.984);">сборки по необработанному</span>
<span class="t" style="left:749px;top:320.15px;font-size:9.3px;color:#111;transform:scaleX(1.011);">срезу ниж. оборки спинки</span>
<span class="t" style="left:749px;top:331.43px;font-size:9.3px;color:#111;transform:scaleX(1.003);">на спец. машине</span>
<span class="t" style="left:749px;top:342.71px;font-size:9.3px;color:#111;transform:scaleX(0.981);">Нитки отделка</span>
<span class="t c" style="left:734.3px;top:320.35px;font-size:10.4px;color:#111;transform:translateX(-50%) scaleX(0.87);">22</span>
<span class="t" style="left:875.5px;top:320.35px;font-size:10.4px;color:#111;transform:scaleX(0.87);">О</span>
<span class="t r" style="left:899px;top:320.35px;font-size:10.4px;color:#111;transform:translateX(-100%) scaleX(0.87);">12</span>
<span class="t r" style="left:934px;top:320.35px;font-size:10.4px;color:#111;transform:translateX(-100%) scaleX(0.87);">0.205</span>
<span class="t r" style="left:970.5px;top:320.35px;font-size:10.4px;color:#111;transform:translateX(-100%) scaleX(0.87);">0.214</span>
<span class="t" style="left:749px;top:357.09px;font-size:9.3px;color:#111;transform:scaleX(0.995);">Проложить строчку для</span>
<span class="t" style="left:749px;top:368.37px;font-size:9.3px;color:#111;transform:scaleX(0.984);">сборки по необработанному</span>
<span class="t" style="left:749px;top:379.65px;font-size:9.3px;color:#111;transform:scaleX(1.011);">срезу верх. оборки переда</span>
<span class="t" style="left:749px;top:390.93px;font-size:9.3px;color:#111;transform:scaleX(1.003);">на спец. машине</span>
<span class="t" style="left:749px;top:402.21px;font-size:9.3px;color:#111;transform:scaleX(0.981);">Нитки отделка</span>
<span class="t c" style="left:734.3px;top:379.85px;font-size:10.4px;color:#111;transform:translateX(-50%) scaleX(0.87);">49</span>
<span class="t" style="left:875.5px;top:379.85px;font-size:10.4px;color:#111;transform:scaleX(0.87);">О</span>
<span class="t r" style="left:899px;top:379.85px;font-size:10.4px;color:#111;transform:translateX(-100%) scaleX(0.87);">12</span>
<span class="t r" style="left:934px;top:379.85px;font-size:10.4px;color:#111;transform:translateX(-100%) scaleX(0.87);">0.244</span>
<span class="t r" style="left:970.5px;top:379.85px;font-size:10.4px;color:#111;transform:translateX(-100%) scaleX(0.87);">0.255</span>
<span class="t" style="left:749px;top:416.59px;font-size:9.3px;color:#111;transform:scaleX(0.995);">Проложить строчку для</span>
<span class="t" style="left:749px;top:427.87px;font-size:9.3px;color:#111;transform:scaleX(0.984);">сборки по необработанному</span>
<span class="t" style="left:749px;top:439.15px;font-size:9.3px;color:#111;transform:scaleX(1.011);">срезу ср. оборки переда</span>
<span class="t" style="left:749px;top:450.43px;font-size:9.3px;color:#111;transform:scaleX(1.003);">на спец. машине</span>
<span class="t" style="left:749px;top:461.71px;font-size:9.3px;color:#111;transform:scaleX(0.981);">Нитки отделка</span>
<span class="t c" style="left:734.3px;top:439.35px;font-size:10.4px;color:#111;transform:translateX(-50%) scaleX(0.87);">51</span>
<span class="t" style="left:875.5px;top:439.35px;font-size:10.4px;color:#111;transform:scaleX(0.87);">О</span>
<span class="t r" style="left:899px;top:439.35px;font-size:10.4px;color:#111;transform:translateX(-100%) scaleX(0.87);">12</span>
<span class="t r" style="left:934px;top:439.35px;font-size:10.4px;color:#111;transform:translateX(-100%) scaleX(0.87);">0.244</span>
<span class="t r" style="left:970.5px;top:439.35px;font-size:10.4px;color:#111;transform:translateX(-100%) scaleX(0.87);">0.255</span>
<span class="t" style="left:749px;top:476.09px;font-size:9.3px;color:#111;transform:scaleX(0.995);">Проложить строчку для</span>
<span class="t" style="left:749px;top:487.37px;font-size:9.3px;color:#111;transform:scaleX(0.984);">сборки по необработанному</span>
<span class="t" style="left:749px;top:498.65px;font-size:9.3px;color:#111;transform:scaleX(1.011);">срезу ниж. оборки переда</span>
<span class="t" style="left:749px;top:509.93px;font-size:9.3px;color:#111;transform:scaleX(1.003);">на спец. машине</span>
<span class="t" style="left:749px;top:521.21px;font-size:9.3px;color:#111;transform:scaleX(0.981);">Нитки отделка</span>
<span class="t c" style="left:734.3px;top:498.85px;font-size:10.4px;color:#111;transform:translateX(-50%) scaleX(0.87);">53</span>
<span class="t" style="left:875.5px;top:498.85px;font-size:10.4px;color:#111;transform:scaleX(0.87);">О</span>
<span class="t r" style="left:899px;top:498.85px;font-size:10.4px;color:#111;transform:translateX(-100%) scaleX(0.87);">12</span>
<span class="t r" style="left:934px;top:498.85px;font-size:10.4px;color:#111;transform:translateX(-100%) scaleX(0.87);">0.244</span>
<span class="t r" style="left:970.5px;top:498.85px;font-size:10.4px;color:#111;transform:translateX(-100%) scaleX(0.87);">0.255</span>
<span class="t" style="left:749px;top:535.48px;font-size:9.3px;color:#111;transform:scaleX(0.995);">Проложить строчку для</span>
<span class="t" style="left:749px;top:546.76px;font-size:9.3px;color:#111;transform:scaleX(1.011);">сборки  по окату рукава</span>
<span class="t" style="left:749px;top:558.04px;font-size:9.3px;color:#111;transform:scaleX(1.011);">швом 0.5см по надсечкам</span>
<span class="t" style="left:749px;top:569.32px;font-size:9.3px;color:#111;transform:scaleX(1.003);">на спец. машине</span>
<span class="t c" style="left:734.3px;top:552.6px;font-size:10.4px;color:#111;transform:translateX(-50%) scaleX(0.87);">77</span>
<span class="t" style="left:875.5px;top:552.6px;font-size:10.4px;color:#111;transform:scaleX(0.87);">О</span>
<span class="t r" style="left:899px;top:552.6px;font-size:10.4px;color:#111;transform:translateX(-100%) scaleX(0.87);">12</span>
<span class="t r" style="left:934px;top:552.6px;font-size:10.4px;color:#111;transform:translateX(-100%) scaleX(0.87);">0.300</span>
<span class="t r" style="left:970.5px;top:552.6px;font-size:10.4px;color:#111;transform:translateX(-100%) scaleX(0.87);">0.313</span>
<div style="left:722px;top:602px;width:253px;height:34.6px;border:1px solid;border-color:#f4f2ee #8c8880 #8c8880 #f4f2ee;"></div>
<span class="t c" style="left:848px;top:607.4px;font-size:10px;transform:translateX(-50%) scaleX(0.935);">Время: 1.548 мин x 456 = 705.888 мин</span>
<span class="t c" style="left:847.7px;top:621.8px;font-size:10px;transform:translateX(-50%) scaleX(0.931);">Стоимость: 1.617 руб x 1.1 x 456 = 811.087 руб</span>
<span class="t r" style="left:147px;top:643.2px;font-size:10px;transform:translateX(-100%) scaleX(0.902);">Поиск фамилии:</span>
<div class="sunk" style="left:149.8px;top:640px;width:140.7px;height:16.3px;background:#fff;"></div>
<div style="left:83px;top:660.5px;width:17.2px;height:15.4px;background:#e6e4de;border:1px solid;border-color:#f6f5f2 #aaa69e #aaa69e #f6f5f2;"></div>
<svg style="left:86.5px;top:664.5px" width="10" height="9" viewBox="0 0 10 9"><path d="M0.8 0.8h8.4L6 4.6V8L4 7V4.6z" fill="#fff" stroke="#0a3a1a" stroke-width="1.2"/></svg>
<span class="t r" style="left:147px;top:661.2px;font-size:10px;transform:translateX(-100%) scaleX(0.928);">Фамилия:</span>
<div class="sunk" style="left:149.8px;top:659px;width:140.7px;height:16.5px;background:#fff;"></div>
<span class="t" style="left:154px;top:662px;font-size:10px;transform:scaleX(0.917);">(не указано)</span>
<div class="btn" style="left:279.3px;top:660.8px;width:10.2px;height:13px;"></div>
<svg style="left:281.5px;top:666px" width="5" height="3" viewBox="0 0 5 3"><path d="M0 0h5L2.5 3z" fill="#000"/></svg>
<span class="t r" style="left:147px;top:680.9px;font-size:10px;transform:translateX(-100%) scaleX(0.908);">Сложность:</span>
<div class="sunk" style="left:149.8px;top:678px;width:140.7px;height:16px;background:#fff;"></div>
<span class="t" style="left:154px;top:681px;font-size:10px;color:#9a968e;transform:scaleX(0.879);">(отсутствует)</span>
<div class="btn" style="left:279.3px;top:679.8px;width:10.2px;height:12.6px;"></div>
<svg style="left:281.5px;top:685px" width="5" height="3" viewBox="0 0 5 3"><path d="M0 0h5L2.5 3z" fill="#888"/></svg>
<span class="t r" style="left:147px;top:700.9px;font-size:10px;transform:translateX(-100%) scaleX(0.908);">Дата выполн-я:</span>
<div class="sunk" style="left:149.8px;top:698px;width:63.2px;height:16.5px;background:#fff;"></div>
<span class="t" style="left:154px;top:701.2px;font-size:10px;transform:scaleX(0.919);">19.01.2012</span>
<div class="btn" style="left:201.5px;top:699.8px;width:10.2px;height:13px;"></div>
<svg style="left:204px;top:705px" width="5" height="3" viewBox="0 0 5 3"><path d="M0 0h5L2.5 3z" fill="#000"/></svg>
<span class="t" style="left:219px;top:700.4px;font-size:10px;transform:scaleX(0.891);">Кол-во:</span>
<div class="sunk" style="left:251px;top:698px;width:38.8px;height:16.8px;background:#fff;"></div>
<span class="t" style="left:254px;top:700.5px;font-size:10px;transform:scaleX(0.899);">456</span>
<div class="btn" style="left:279.5px;top:699.8px;width:9.5px;height:6.6px;"></div>
<div class="btn" style="left:279.5px;top:706.4px;width:9.5px;height:6.6px;"></div>
<svg style="left:281.5px;top:702px" width="5" height="10" viewBox="0 0 5 10"><path d="M0 3h5L2.5 0zM0 7h5L2.5 10z" fill="#000"/></svg>
<div class="sunk" style="left:294.3px;top:638.3px;width:9px;height:9px;background:#fff;"></div>
<span class="t" style="left:307.5px;top:637.2px;font-size:10px;transform:scaleX(0.908);">Не оплачивать</span>
<span class="t" style="left:295px;top:648.3px;font-size:10px;transform:scaleX(0.884);">Табельн. номер:</span>
<div class="sunk" style="left:296px;top:658.8px;width:64.8px;height:15.8px;background:#fff;"></div>
<div class="btn" style="left:296px;top:678.5px;width:65px;height:18px;"></div>
<span class="t c" style="left:328.5px;top:681.2px;font-size:10px;transform:translateX(-50%) scaleX(1.001);">Записать</span>
<div class="grp" style="left:370.7px;top:643.6px;width:90.3px;height:72.8px;"></div>
<div style="left:375px;top:638px;width:54.5px;height:12px;background:#d4d0c8;"></div>
<span class="t" style="left:376px;top:638.8px;font-size:10px;transform:scaleX(1.032);">Разбиение</span>
<div class="btn" style="left:374.5px;top:650.3px;width:81.5px;height:15.2px;"></div>
<span class="t c" style="left:415.3px;top:652.3px;font-size:10px;transform:translateX(-50%) scaleX(1.021);">По количеству</span>
<div class="btn" style="left:374.5px;top:666.0999999999999px;width:81.5px;height:15.2px;"></div>
<span class="t c" style="left:415.3px;top:668.1px;font-size:10px;transform:translateX(-50%) scaleX(0.988);">По операциям</span>
<div class="btn" style="left:374.5px;top:681.9px;width:81.5px;height:15.2px;"></div>
<span class="t c" style="left:415.3px;top:683.9px;font-size:10px;transform:translateX(-50%) scaleX(1.011);">Убрать часть</span>
<div class="btn" style="left:374.5px;top:697.6999999999999px;width:81.5px;height:15.2px;"></div>
<span class="t c" style="left:415.3px;top:699.7px;font-size:10px;transform:translateX(-50%) scaleX(0.996);">Объединить все</span>
<div class="grp" style="left:565.4px;top:643.7px;width:74.3px;height:72.7px;"></div>
<div style="left:570px;top:638px;width:64px;height:12px;background:#d4d0c8;"></div>
<span class="t" style="left:571px;top:638.8px;font-size:10px;transform:scaleX(0.895);">Коэфф.тиража</span>
<div class="btn" style="left:568.2px;top:655.9px;width:68.8px;height:17.3px;"></div>
<span class="t c" style="left:602.7px;top:659.1px;font-size:10px;transform:translateX(-50%) scaleX(0.966);">Снять</span>
<div class="btn" style="left:568.2px;top:674.3px;width:68.8px;height:17.3px;"></div>
<span class="t c" style="left:602.7px;top:677.5px;font-size:10px;transform:translateX(-50%) scaleX(1.013);">Установить</span>
<div class="btn" style="left:568.2px;top:692.6999999999999px;width:68.8px;height:17.3px;"></div>
<span class="t c" style="left:602.7px;top:695.9px;font-size:10px;transform:translateX(-50%) scaleX(0.917);">Выбрать: 1.1</span>
</body></html>
